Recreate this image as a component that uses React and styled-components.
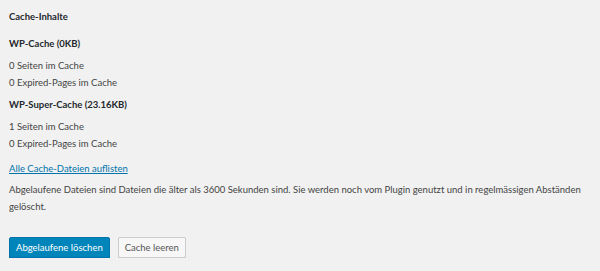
import React from "react";
import styled, { createGlobalStyle } from "styled-components";

const GlobalStyle = createGlobalStyle`
  html, body {
    margin: 0;
    padding: 0;
    background: #f1f1f1;
  }
  body {
    font-family: Lato, "Open Sans", sans-serif;
    color: #444;
  }
`;

const Wrap = styled.div`
  padding: 10px 2px 0 9px;
  font-size: 9.5px;
  line-height: 17px;
`;

const Title = styled.h3`
  margin: 0 0 11px;
  font-size: 9.5px;
  font-weight: 700;
  color: #23282d;
  line-height: 14px;
`;

const Heading = styled.h4`
  margin: 0 0 5px;
  font-size: 9.5px;
  font-weight: 700;
  color: #23282d;
  line-height: 17px;
`;

const Line = styled.p`
  margin: 0;
  line-height: 17px;
`;

const Group = styled.div`
  margin-bottom: 5px;
`;

const ListLink = styled.a`
  display: inline-block;
  color: #0073aa;
  text-decoration: underline;
  margin: 3px 0 4px;
`;

const Note = styled.p`
  margin: 0;
  line-height: 17px;
`;

const Actions = styled.div`
  display: flex;
  gap: 8px;
  margin-top: 22px;
`;

const Button = styled.button`
  font-family: inherit;
  font-size: 9.5px;
  height: 21px;
  padding: 0 6px;
  border-radius: 2px;
  cursor: pointer;
  border: 1px solid ${(p) => (p.primary ? "#0073aa" : "#ccc")};
  background: ${(p) => (p.primary ? "#0085ba" : "#f7f7f7")};
  color: ${(p) => (p.primary ? "#fff" : "#555")};
  box-shadow: ${(p) => (p.primary ? "0 1px 0 #006799" : "0 1px 0 #ccc")};
`;

export default function App() {
  return (
    <>
      <GlobalStyle />
      <Wrap>
        <Title>Cache-Inhalte</Title>
        <Group>
          <Heading>WP-Cache (0KB)</Heading>
          <Line>0 Seiten im Cache</Line>
          <Line>0 Expired-Pages im Cache</Line>
        </Group>
        <Group>
          <Heading>WP-Super-Cache (23.16KB)</Heading>
          <Line>1 Seiten im Cache</Line>
          <Line>0 Expired-Pages im Cache</Line>
        </Group>
        <ListLink href="#">Alle Cache-Dateien auflisten</ListLink>
        <Note>
          Abgelaufene Dateien sind Dateien die älter als 3600 Sekunden sind. Sie
          werden noch vom Plugin genutzt und in regelmässigen Abständen
          gelöscht.
        </Note>
        <Actions>
          <Button primary>Abgelaufene löschen</Button>
          <Button>Cache leeren</Button>
        </Actions>
      </Wrap>
    </>
  );
}
